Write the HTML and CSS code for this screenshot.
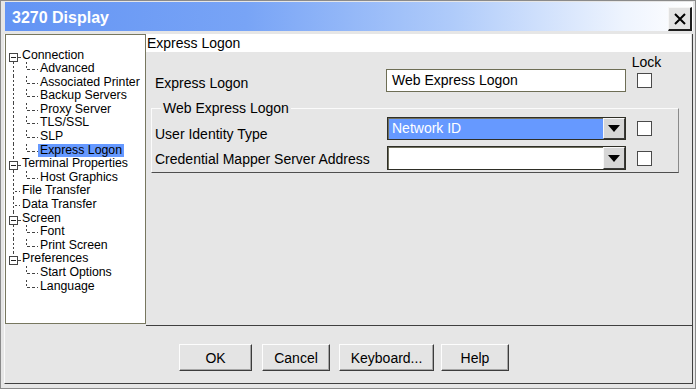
FILE: index.html
```html
<!DOCTYPE html>
<html lang="en">
<head>
<meta charset="utf-8">
<title>3270 Display</title>
<link rel="stylesheet" href="styles.css">
</head>
<body>
<div class="window">
  <div class="titlebar">
    <span class="title">3270 Display</span>
    <button class="close" aria-label="Close">
      <svg width="14" height="14" viewBox="0 0 14 14"><path d="M2 2L12 12M12 2L2 12" stroke="#000" stroke-width="2" fill="none"/></svg>
    </button>
  </div>
  <div class="content">
    <div class="main">
      <div class="tree">
        <div class="node"><span class="lead down"><span class="box"></span></span><span class="label">Connection</span></div>
        <div class="node"><span class="lead guide"></span><span class="conn"></span><span class="label">Advanced</span></div>
        <div class="node"><span class="lead guide"></span><span class="conn"></span><span class="label">Associated Printer</span></div>
        <div class="node"><span class="lead guide"></span><span class="conn"></span><span class="label">Backup Servers</span></div>
        <div class="node"><span class="lead guide"></span><span class="conn"></span><span class="label">Proxy Server</span></div>
        <div class="node"><span class="lead guide"></span><span class="conn"></span><span class="label">TLS/SSL</span></div>
        <div class="node"><span class="lead guide"></span><span class="conn"></span><span class="label">SLP</span></div>
        <div class="node selected"><span class="lead guide"></span><span class="conn"></span><span class="label">Express Logon</span></div>
        <div class="node"><span class="lead through"><span class="box"></span></span><span class="label">Terminal Properties</span></div>
        <div class="node"><span class="lead guide"></span><span class="conn"></span><span class="label">Host Graphics</span></div>
        <div class="node"><span class="lead leaf"></span><span class="label">File Transfer</span></div>
        <div class="node"><span class="lead leaf"></span><span class="label">Data Transfer</span></div>
        <div class="node"><span class="lead through"><span class="box"></span></span><span class="label">Screen</span></div>
        <div class="node"><span class="lead guide"></span><span class="conn"></span><span class="label">Font</span></div>
        <div class="node"><span class="lead guide"></span><span class="conn"></span><span class="label">Print Screen</span></div>
        <div class="node"><span class="lead up"><span class="box"></span></span><span class="label">Preferences</span></div>
        <div class="node"><span class="lead"></span><span class="conn"></span><span class="label">Start Options</span></div>
        <div class="node"><span class="lead"></span><span class="conn"></span><span class="label">Language</span></div>
      </div>
      <div class="panel">
        <div class="panel-head">Express Logon</div>
        <div class="form">
          <div class="row lock-row">
            <span class="lbl"></span><span class="ctl"></span><span class="chk-col lock">Lock</span>
          </div>
          <div class="row r1">
            <span class="lbl">Express Logon</span>
            <div class="ctl text">Web Express Logon</div>
            <span class="chk-col"><span class="cb"></span></span>
          </div>
          <fieldset class="group">
            <legend>Web Express Logon</legend>
            <div class="grow ga">
              <span class="lbl">User Identity Type</span>
              <div class="select filled"><span class="val">Network ID</span><span class="arrow"><span class="tri"></span></span></div>
              <span class="chk-col"><span class="cb"></span></span>
            </div>
            <div class="grow gb">
              <span class="lbl">Credential Mapper Server Address</span>
              <div class="select"><span class="val"></span><span class="arrow"><span class="tri"></span></span></div>
              <span class="chk-col"><span class="cb"></span></span>
            </div>
          </fieldset>
        </div>
      </div>
    </div>
    <div class="buttons">
      <button class="btn ok">OK</button>
      <button class="btn cancel">Cancel</button>
      <button class="btn keyboard">Keyboard...</button>
      <button class="btn help">Help</button>
    </div>
  </div>
</div>
</body>
</html>
```
FILE: styles.css
```css
* { box-sizing: border-box; }
html, body { margin: 0; padding: 0; }
body {
  width: 696px;
  height: 389px;
  overflow: hidden;
  background: #e6e6e6;
  font-family: "Liberation Sans", Arial, sans-serif;
  color: #000;
}
.window {
  width: 696px;
  height: 389px;
  border: 1px solid #8a8a8a;
  padding: 1px 2px 4px 3px;
  background: #e6e6e6;
  display: flex;
  flex-direction: column;
}
.titlebar {
  height: 29px;
  flex: none;
  margin-left: 1px;
  padding-left: 7px;
  display: flex;
  align-items: flex-start;
  background: linear-gradient(to right, #6394f4 0%, #78a4f6 35%, #afcbfa 65%, #eef4fe 90%, #ffffff 100%);
}
.title {
  display: block;
  color: #fff;
  font-weight: bold;
  font-size: 16px;
  line-height: 26px;
  padding-top: 3px;
}
.close {
  margin: 5px 1px 0 auto;
  width: 24px;
  height: 24px;
  padding: 0;
  background: #e2e2e2;
  border-style: solid;
  border-width: 1px 2px 2px 1px;
  border-color: #f6f6f6 #1e1e1e #1e1e1e #f6f6f6;
  display: flex;
  align-items: center;
  justify-content: center;
}
.content {
  margin-top: 3px;
  flex: 1;
  display: flex;
  flex-direction: column;
  border-left: 1px solid #fafafa;
  border-right: 1px solid #404040;
  border-bottom: 1px solid #404040;
}
.main {
  display: flex;
  align-items: flex-start;
  height: 292px;
  flex: none;
}

/* tree */
.tree {
  width: 141px;
  height: 290px;
  flex: none;
  background: #fff;
  border: 1px solid #77775f;
  padding-top: 13.5px;
  font-size: 12.3px;
}
.node {
  display: flex;
  height: 13.6px;
  line-height: 13.6px;
  white-space: nowrap;
}
.lead {
  width: 14px;
  height: 100%;
  flex: none;
  position: relative;
}
.lead.guide,
.lead.through {
  background: repeating-linear-gradient(to bottom, #444 0 2px, transparent 2px 4px) 7px 0 / 1px 100% no-repeat;
}
.lead.down {
  background: repeating-linear-gradient(to bottom, #444 0 2px, transparent 2px 4px) 7px 100% / 1px 50% no-repeat;
}
.lead.up {
  background: repeating-linear-gradient(to bottom, #444 0 2px, transparent 2px 4px) 7px 0 / 1px 50% no-repeat;
}
.lead.leaf {
  background:
    repeating-linear-gradient(to right, #444 0 2px, transparent 2px 4px) 9px 7px / 6px 1px no-repeat,
    repeating-linear-gradient(to bottom, #444 0 2px, transparent 2px 4px) 7px 0 / 1px 100% no-repeat;
}
.box {
  display: block;
  width: 9px;
  height: 9px;
  margin: 4px 0 0 3px;
  border: 1px solid #444;
  background: #fff linear-gradient(#222, #222) center / 5px 1px no-repeat;
}
.lead.down::after, .lead.through::after, .lead.up::after {
  content: "";
  position: absolute;
  left: 12px;
  top: 8px;
  width: 3px;
  height: 1px;
  background: #444;
}
.conn {
  width: 18px;
  height: 100%;
  flex: none;
  background:
    repeating-linear-gradient(to bottom, #444 0 2px, transparent 2px 4px) 6px 0 / 1px 7px no-repeat,
    repeating-linear-gradient(to right, #444 0 3px, transparent 3px 5px) 7px 7px / 11px 1px no-repeat;
}
.label {
  padding: 0 2px;
}
.node.selected .label {
  background: #6699ff;
}

/* panel */
.panel {
  flex: 1;
  height: 292px;
  border-bottom: 1px solid #404040;
}
.panel-head {
  height: 18px;
  background: #fff;
  font-size: 14px;
  line-height: 17px;
  padding: 1px 0 0 1px;
  margin-right: 1px;
}
.form {
  padding: 3px 0 0 5px;
  font-size: 14px;
}
.row {
  display: flex;
  padding-left: 4px;
}
.lbl {
  width: 231px;
  flex: none;
  line-height: 16px;
  white-space: nowrap;
}
.ctl {
  width: 240px;
  flex: none;
}
.chk-col {
  width: 16px;
  flex: none;
  margin-left: 11px;
  display: flex;
  align-items: center;
}
.lock-row {
  height: 14px;
  line-height: 14px;
}
.lock {
  justify-content: center;
  padding-left: 3px;
  white-space: nowrap;
}
.r1 {
  height: 23px;
}
.r1 .lbl {
  padding-top: 6px;
}
.text {
  height: 23px;
  border: 1px solid #6e6e55;
  background: #fff;
  padding-left: 5px;
  line-height: 21px;
}
.cb {
  display: block;
  width: 15px;
  height: 15px;
  border: 1px solid #4a4a4a;
  background: #fff;
}

/* group */
.group {
  margin: 8px 0 0 0;
  width: 528px;
  min-width: 0;
  padding: 0 0 2px 3px;
  border-style: solid;
  border-width: 1px;
  border-color: #fbfbfb #8a8a8a #4e4e4e #fbfbfb;
}
.group legend {
  font-size: 14px;
  line-height: 17px;
  padding: 0 2px;
  margin-left: 6px;
}
.grow {
  display: flex;
}
.grow .lbl {
  width: 232px;
}
.ga {
  height: 23px;
}
.ga .lbl {
  padding-top: 9px;
}
.gb {
  height: 24px;
  margin-top: 6px;
}
.gb .lbl {
  padding-top: 5px;
}
.select {
  width: 239px;
  height: 100%;
  flex: none;
  display: flex;
  border: 1px solid #2e2e26;
  background: #fff;
  box-shadow: inset 1px 1px 0 #70705e;
}
.select.filled {
  background: #6699ff;
  color: #fff;
}
.val {
  flex: 1;
  padding-left: 4px;
  line-height: 21px;
}
.arrow {
  width: 22px;
  flex: none;
  background: #d6d6d6;
  border: 1px solid;
  border-color: #f8f8f8 #3a3a3a #3a3a3a #f8f8f8;
  display: flex;
  align-items: center;
  justify-content: center;
}
.tri {
  width: 0;
  height: 0;
  border-left: 6px solid transparent;
  border-right: 6px solid transparent;
  border-top: 7px solid #000;
}

/* buttons */
.buttons {
  flex: 1;
  display: flex;
  align-items: flex-start;
  gap: 9px;
  padding: 18px 0 0 174px;
}
.btn {
  height: 27px;
  font: 14px "Liberation Sans", Arial, sans-serif;
  color: #000;
  background: #e4e4e4;
  border: 1px solid;
  border-color: #fdfdfd #3c3c3c #3c3c3c #fdfdfd;
  box-shadow: inset -1px -1px 0 #a6a6a6;
  padding: 0;
}
.ok { width: 73px; }
.cancel { width: 68px; margin-left: 1px; }
.keyboard { width: 95px; }
.help { width: 68px; margin-left: -2px; }
```
